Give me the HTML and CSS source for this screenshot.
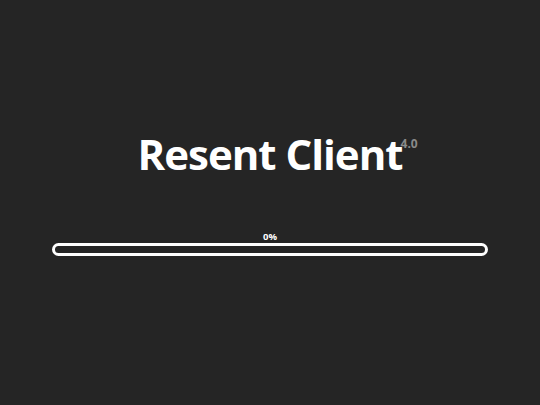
FILE: index.html
```html
<!DOCTYPE html>
<html>
<head>
<meta charset="utf-8">
<link rel="stylesheet" href="styles.css">
</head>
<body>
<div class="screen">
  <div class="title-wrap">
    <h1 class="title">Resent Client<span class="version">4.0</span></h1>
  </div>
  <div class="progress">
    <div class="percent">0%</div>
    <div class="bar"><div class="fill" style="width:0%"></div></div>
  </div>
</div>
</body>
</html>
```
FILE: styles.css
```css
html, body {
  margin: 0;
  padding: 0;
  background: #252525;
}
.screen {
  width: 540px;
  height: 405px;
  display: flex;
  flex-direction: column;
  align-items: center;
  font-family: "Open Sans", "DejaVu Sans", sans-serif;
  color: #fff;
}
.title-wrap {
  margin-top: 124px;
  display: flex;
  justify-content: center;
}
.title {
  position: relative;
  margin: 0;
  font-size: 42px;
  font-weight: 700;
  letter-spacing: -1px;
  line-height: 60px;
}
.version {
  position: absolute;
  left: 100%;
  top: 13px;
  margin-left: -2px;
  font-size: 12px;
  line-height: 14px;
  letter-spacing: 0;
  color: #8a8a8a;
}
.progress {
  margin-top: 47px;
  width: 436px;
  display: flex;
  flex-direction: column;
  align-items: center;
}
.percent {
  font-size: 9.5px;
  font-weight: 700;
  line-height: 11px;
  margin-bottom: 1px;
}
.bar {
  width: 100%;
  height: 13px;
  border: 3px solid #fff;
  border-radius: 8px;
  box-sizing: border-box;
  overflow: hidden;
}
.fill {
  height: 100%;
  background: #fff;
}
```
